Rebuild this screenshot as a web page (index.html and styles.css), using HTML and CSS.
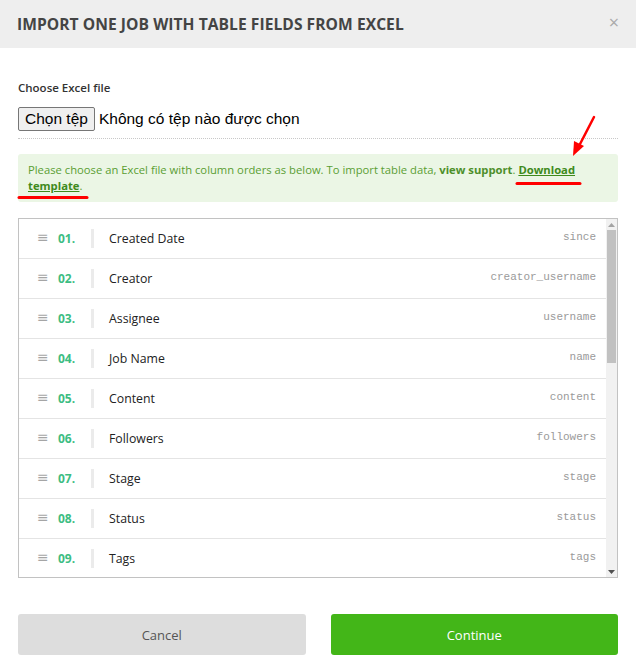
FILE: index.html
```html
<!DOCTYPE html>
<html lang="vi">
<head>
<meta charset="utf-8">
<title>Import one job</title>
<link rel="stylesheet" href="styles.css">
</head>
<body>
<div class="modal">
  <div class="modal-header">
    <h1 class="modal-title">IMPORT ONE JOB WITH TABLE FIELDS FROM EXCEL</h1>
    <span class="close">&#215;</span>
  </div>
  <div class="modal-body">
    <div class="field-label">Choose Excel file</div>
    <div class="file-row">
      <button class="file-btn" type="button">Chọn tệp</button>
      <span class="file-text">Không có tệp nào được chọn</span>
    </div>
    <div class="alert">
      Please choose an Excel file with column orders as below. To import table data, <b>view support</b>. <a class="dl" href="#">Download template</a>.
    </div>
    <div class="list">
      <div class="rows">
        <div class="row"><span class="drag">&#8801;</span><span class="num">01.</span><span class="sep"></span><span class="name">Created Date</span><span class="key">since</span></div>
        <div class="row"><span class="drag">&#8801;</span><span class="num">02.</span><span class="sep"></span><span class="name">Creator</span><span class="key">creator_username</span></div>
        <div class="row"><span class="drag">&#8801;</span><span class="num">03.</span><span class="sep"></span><span class="name">Assignee</span><span class="key">username</span></div>
        <div class="row"><span class="drag">&#8801;</span><span class="num">04.</span><span class="sep"></span><span class="name">Job Name</span><span class="key">name</span></div>
        <div class="row"><span class="drag">&#8801;</span><span class="num">05.</span><span class="sep"></span><span class="name">Content</span><span class="key">content</span></div>
        <div class="row"><span class="drag">&#8801;</span><span class="num">06.</span><span class="sep"></span><span class="name">Followers</span><span class="key">followers</span></div>
        <div class="row"><span class="drag">&#8801;</span><span class="num">07.</span><span class="sep"></span><span class="name">Stage</span><span class="key">stage</span></div>
        <div class="row"><span class="drag">&#8801;</span><span class="num">08.</span><span class="sep"></span><span class="name">Status</span><span class="key">status</span></div>
        <div class="row"><span class="drag">&#8801;</span><span class="num">09.</span><span class="sep"></span><span class="name">Tags</span><span class="key">tags</span></div>
      </div>
      <div class="scrollbar">
        <div class="sb-btn"><svg width="7" height="4" viewBox="0 0 7 4"><polygon points="0,4 7,4 3.5,0" fill="#a3a3a3"/></svg></div>
        <div class="sb-track"><div class="sb-thumb"></div></div>
        <div class="sb-btn"><svg width="7" height="4" viewBox="0 0 7 4"><polygon points="0,0 7,0 3.5,4" fill="#505050"/></svg></div>
      </div>
    </div>
  </div>
  <div class="modal-footer">
    <button class="btn btn-cancel" type="button">Cancel</button>
    <button class="btn btn-continue" type="button">Continue</button>
  </div>
</div>
<svg class="annot" width="636" height="668" viewBox="0 0 636 668">
  <line x1="594" y1="117" x2="579" y2="146" stroke="#f00" stroke-width="2.5" stroke-linecap="round"/>
  <polygon points="573,156 574,141 584,146" fill="#f00"/>
  <line x1="517" y1="183.5" x2="580" y2="183.5" stroke="#f00" stroke-width="3" stroke-linecap="round"/>
  <line x1="19" y1="197.5" x2="87" y2="197.5" stroke="#f00" stroke-width="3" stroke-linecap="round"/>
</svg>
</body>
</html>
```

FILE: styles.css
```css
* { box-sizing: border-box; }
html, body { margin: 0; padding: 0; background: #fff; }
body {
  font-family: "Open Sans", "Noto Sans", "Liberation Sans", sans-serif;
  color: #333;
  position: relative;
  width: 636px;
  height: 668px;
  overflow: hidden;
}
.modal { width: 636px; }
.modal-header {
  height: 48px;
  background: #eeeeee;
  padding: 0 17px 0 17px;
  display: flex;
  align-items: center;
  justify-content: space-between;
}
.modal-title {
  margin: 0;
  font-size: 15.6px;
  font-weight: 700;
  color: #444;
  letter-spacing: 0.05px;
}
.close {
  font-size: 18px;
  color: #aaa;
  line-height: 1;
  margin-top: -4px;
}
.modal-body { padding: 32px 18px 0 18px; }
.field-label {
  font-size: 11.5px;
  font-weight: 600;
  color: #333;
  line-height: 16px;
}
.file-row {
  margin-top: 11px;
  height: 32px;
  border-bottom: 1px dotted #c8c8c8;
  display: flex;
  align-items: flex-start;
  font-family: "Liberation Sans", Arial, sans-serif;
}
.file-btn {
  font-family: "Liberation Sans", Arial, sans-serif;
  font-size: 15.5px;
  height: 24px;
  padding: 0 6px;
  background: #efefef;
  border: 1px solid #767676;
  border-radius: 2px;
  color: #000;
}
.file-text { font-size: 15.5px; color: #000; margin-left: 4px; line-height: 24px; }
.alert {
  margin-top: 15px;
  height: 48px;
  background: #ebf6e5;
  border-radius: 3px;
  padding: 8px 10px;
  font-size: 11.25px;
  line-height: 16px;
  color: #5a9e33;
}
.alert b { font-weight: 700; color: #4d8f2a; }
.alert .dl { color: #3f8a1c; font-weight: 700; text-decoration: underline; }
.list {
  margin-top: 16px;
  height: 360px;
  border: 1px solid #c2c2c2;
  display: flex;
}
.rows { flex: 1; overflow: hidden; }
.scrollbar {
  width: 11px;
  background: #f1f1f1;
  display: flex;
  flex-direction: column;
}
.sb-btn {
  height: 11px;
  display: flex;
  align-items: center;
  justify-content: center;
}
.sb-btn svg { display: block; }
.sb-track { flex: 1; padding: 0 1px; }
.sb-thumb { height: 133px; background: #c1c1c1; }
.row {
  height: 40px;
  border-bottom: 1px solid #e4e4e4;
  display: flex;
  align-items: center;
  padding: 0 10px 0 18px;
}
.drag {
  width: 12px;
  color: #a5a5a5;
  font-size: 14px;
  line-height: 1;
  margin-top: -4px;
  font-family: "DejaVu Sans", sans-serif;
}
.num {
  width: 30px;
  margin-left: 9px;
  font-size: 12px;
  font-weight: 700;
  color: #3dbd82;
}
.sep {
  width: 3px;
  height: 19px;
  background: #ebebeb;
  margin-left: 3px;
}
.name {
  margin-left: 15px;
  font-size: 12.3px;
  color: #222;
  flex: 1;
}
.key {
  font-family: "Liberation Mono", "DejaVu Sans Mono", monospace;
  font-size: 11px;
  color: #9a9a9a;
  margin-top: -4px;
}
.modal-footer {
  padding: 36px 18px 0 18px;
  display: flex;
  gap: 25px;
}
.btn {
  flex: 1;
  height: 41px;
  border: none;
  border-radius: 3px;
  font-family: "Open Sans", "Noto Sans", sans-serif;
  font-size: 13px;
}
.btn-cancel { background: #dddddd; color: #555; }
.btn-continue { background: #43b618; color: #fff; }
.annot { position: absolute; left: 0; top: 0; pointer-events: none; }
```
